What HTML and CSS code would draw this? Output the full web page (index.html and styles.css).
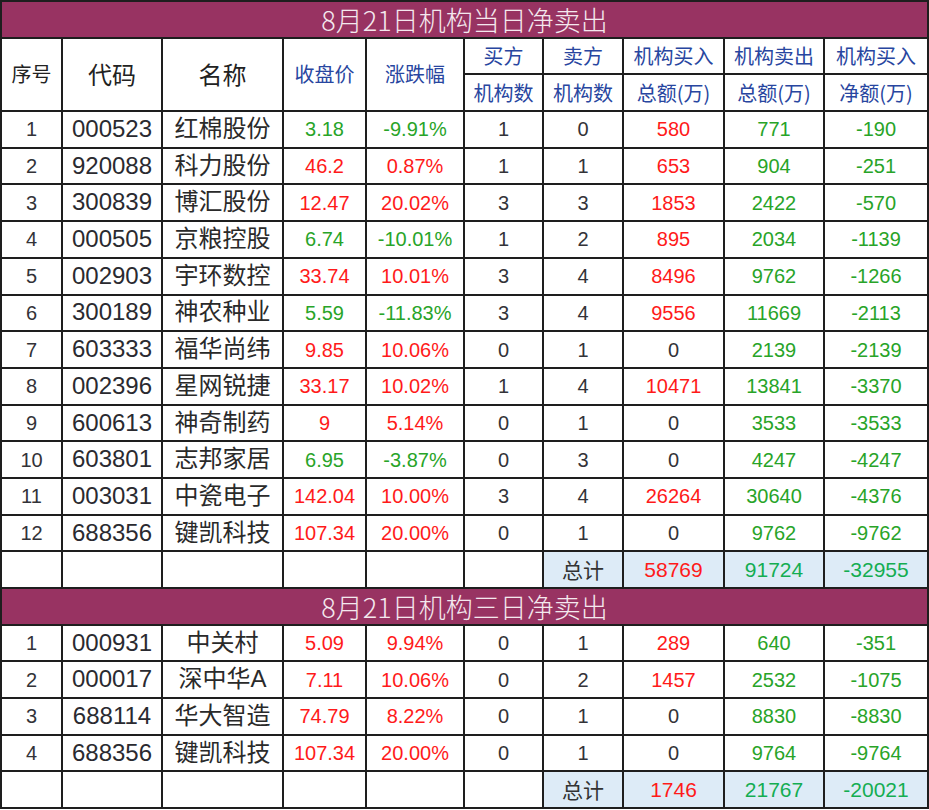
FILE: index.html
```html
<!DOCTYPE html>
<html lang="zh">
<head>
<meta charset="utf-8">
<title>机构净卖出</title>
<link rel="stylesheet" href="styles.css">
</head>
<body>
<table class="sheet">
<colgroup>
<col class="c1"><col class="c2"><col class="c3"><col class="c4"><col class="c5">
<col class="c6"><col class="c7"><col class="c8"><col class="c9"><col class="c10">
</colgroup>
<tbody>
<tr class="title"><td colspan="10">8月21日机构当日净卖出</td></tr>
<tr class="head">
<td rowspan="2" class="hk">序号</td>
<td rowspan="2" class="hk big">代码</td>
<td rowspan="2" class="hk big">名称</td>
<td rowspan="2" class="hb">收盘价</td>
<td rowspan="2" class="hb">涨跌幅</td>
<td class="hb">买方</td><td class="hb">卖方</td><td class="hb">机构买入</td><td class="hb">机构卖出</td><td class="hb">机构买入</td>
</tr>
<tr class="head">
<td class="hb">机构数</td><td class="hb">机构数</td><td class="hb">总额(万)</td><td class="hb">总额(万)</td><td class="hb">净额(万)</td>
</tr>
<tr><td>1</td><td class="code">000523</td><td class="name">红棉股份</td><td class="g">3.18</td><td class="g">-9.91%</td><td>1</td><td>0</td><td class="r">580</td><td class="g">771</td><td class="g">-190</td></tr>
<tr><td>2</td><td class="code">920088</td><td class="name">科力股份</td><td class="r">46.2</td><td class="r">0.87%</td><td>1</td><td>1</td><td class="r">653</td><td class="g">904</td><td class="g">-251</td></tr>
<tr><td>3</td><td class="code">300839</td><td class="name">博汇股份</td><td class="r">12.47</td><td class="r">20.02%</td><td>3</td><td>3</td><td class="r">1853</td><td class="g">2422</td><td class="g">-570</td></tr>
<tr><td>4</td><td class="code">000505</td><td class="name">京粮控股</td><td class="g">6.74</td><td class="g">-10.01%</td><td>1</td><td>2</td><td class="r">895</td><td class="g">2034</td><td class="g">-1139</td></tr>
<tr><td>5</td><td class="code">002903</td><td class="name">宇环数控</td><td class="r">33.74</td><td class="r">10.01%</td><td>3</td><td>4</td><td class="r">8496</td><td class="g">9762</td><td class="g">-1266</td></tr>
<tr><td>6</td><td class="code">300189</td><td class="name">神农种业</td><td class="g">5.59</td><td class="g">-11.83%</td><td>3</td><td>4</td><td class="r">9556</td><td class="g">11669</td><td class="g">-2113</td></tr>
<tr><td>7</td><td class="code">603333</td><td class="name">福华尚纬</td><td class="r">9.85</td><td class="r">10.06%</td><td>0</td><td>1</td><td>0</td><td class="g">2139</td><td class="g">-2139</td></tr>
<tr><td>8</td><td class="code">002396</td><td class="name">星网锐捷</td><td class="r">33.17</td><td class="r">10.02%</td><td>1</td><td>4</td><td class="r">10471</td><td class="g">13841</td><td class="g">-3370</td></tr>
<tr><td>9</td><td class="code">600613</td><td class="name">神奇制药</td><td class="r">9</td><td class="r">5.14%</td><td>0</td><td>1</td><td>0</td><td class="g">3533</td><td class="g">-3533</td></tr>
<tr><td>10</td><td class="code">603801</td><td class="name">志邦家居</td><td class="g">6.95</td><td class="g">-3.87%</td><td>0</td><td>3</td><td>0</td><td class="g">4247</td><td class="g">-4247</td></tr>
<tr><td>11</td><td class="code">003031</td><td class="name">中瓷电子</td><td class="r">142.04</td><td class="r">10.00%</td><td>3</td><td>4</td><td class="r">26264</td><td class="g">30640</td><td class="g">-4376</td></tr>
<tr><td>12</td><td class="code">688356</td><td class="name">键凯科技</td><td class="r">107.34</td><td class="r">20.00%</td><td>0</td><td>1</td><td>0</td><td class="g">9762</td><td class="g">-9762</td></tr>
<tr class="total"><td></td><td></td><td></td><td></td><td></td><td></td><td class="sum lbl">总计</td><td class="sum r">58769</td><td class="sum gt">91724</td><td class="sum gt">-32955</td></tr>
<tr class="title"><td colspan="10">8月21日机构三日净卖出</td></tr>
<tr><td>1</td><td class="code">000931</td><td class="name">中关村</td><td class="r">5.09</td><td class="r">9.94%</td><td>0</td><td>1</td><td class="r">289</td><td class="g">640</td><td class="g">-351</td></tr>
<tr><td>2</td><td class="code">000017</td><td class="name">深中华A</td><td class="r">7.11</td><td class="r">10.06%</td><td>0</td><td>2</td><td class="r">1457</td><td class="g">2532</td><td class="g">-1075</td></tr>
<tr><td>3</td><td class="code">688114</td><td class="name">华大智造</td><td class="r">74.79</td><td class="r">8.22%</td><td>0</td><td>1</td><td>0</td><td class="g">8830</td><td class="g">-8830</td></tr>
<tr><td>4</td><td class="code">688356</td><td class="name">键凯科技</td><td class="r">107.34</td><td class="r">20.00%</td><td>0</td><td>1</td><td>0</td><td class="g">9764</td><td class="g">-9764</td></tr>
<tr class="total"><td></td><td></td><td></td><td></td><td></td><td></td><td class="sum lbl">总计</td><td class="sum r">1746</td><td class="sum gt">21767</td><td class="sum gt">-20021</td></tr>
</tbody>
</table>
</body>
</html>
```

FILE: styles.css
```css
html, body {
  margin: 0;
  padding: 0;
  background: #ffffff;
}

.sheet {
  width: 929px;
  table-layout: fixed;
  border-collapse: collapse;
  font-family: "Liberation Sans", "Noto Sans CJK SC", sans-serif;
  font-size: 20px;
  color: #333338;
}

.c1 { width: 61px; }
.c2 { width: 100px; }
.c3 { width: 121px; }
.c4 { width: 83px; }
.c5 { width: 98px; }
.c6 { width: 79px; }
.c7 { width: 80px; }
.c8 { width: 101px; }
.c9 { width: 100px; }
.c10 { width: 104px; }

.sheet tr {
  height: 36.7px;
}

.sheet td {
  border: 2px solid #1e1e1e;
  padding: 0;
  text-align: center;
  vertical-align: middle;
  line-height: 1.2;
  white-space: nowrap;
}

.title td {
  background: #983362;
  color: #f4e8ee;
  font-family: "Noto Sans CJK SC", sans-serif;
  font-weight: 300;
  font-size: 27px;
  line-height: 30px;
  padding-top: 2px;
}

.head td {
  font-family: "Noto Sans CJK SC", sans-serif;
  font-size: 20px;
}

.hk {
  color: #222222;
}

.hk.big {
  font-size: 24px !important;
}

.hb {
  color: #2846a0;
}

.code {
  font-size: 24px;
  color: #2a2a30;
}

.name {
  font-size: 24px;
  color: #2a2a2a;
}

.r {
  color: #ff1a1a;
}

.g {
  color: #28a428;
}

.gt {
  color: #14ad52;
}

.sum {
  background: #ddebf7;
  font-size: 21px;
}

.lbl {
  font-family: "Noto Sans CJK SC", sans-serif;
  font-weight: 400;
  font-size: 21px;
  color: #333333;
}
```
